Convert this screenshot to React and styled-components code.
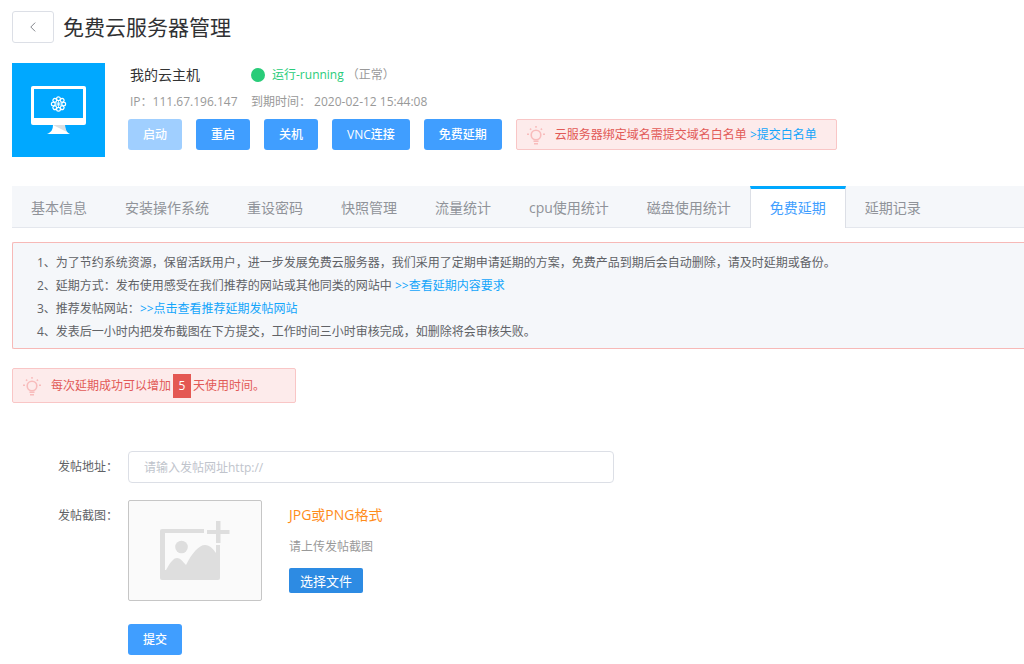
import React from "react";
import styled, { createGlobalStyle, css } from "styled-components";

const GlobalStyle = createGlobalStyle`
  *, *::before, *::after { box-sizing: border-box; }
  body {
    margin: 0;
    background: #fff;
    color: #606266;
    font: 12px/20px "Open Sans", "Noto Sans CJK SC", sans-serif;
  }
  button, input { font: inherit; }
  h1, h2, p, ol { margin: 0; padding: 0; font-weight: 400; }
  a { color: #12a5fb; text-decoration: none; }
`;

const Page = styled.main`
  padding: 11px 0 8px 12px;
`;

const TitleBar = styled.header`
  display: flex;
  align-items: center;
  gap: 9px;
  height: 32px;
`;

const BackButton = styled.button`
  display: flex;
  align-items: center;
  justify-content: center;
  width: 42px;
  height: 32px;
  padding: 0;
  border: 1px solid #dcdfe6;
  border-radius: 3px;
  background: #fff;
`;

const Title = styled.h1`
  color: #303133;
  font-size: 21px;
  line-height: 32px;
`;

const Server = styled.section`
  display: flex;
  gap: 23px;
  margin-top: 20px;
`;

const ServerTile = styled.div`
  flex: none;
  width: 93px;
  height: 94px;
  background: #00a8ff;
  svg { display: block; }
`;

const ServerInfo = styled.div`
  flex: 1;
`;

const Facts = styled.div`
  display: grid;
  grid-template-columns: 121px auto;
  grid-template-rows: 24px 30px;
  align-items: center;
  padding-left: 2px;
  color: #999;
`;

const ServerName = styled.h2`
  color: #333;
  font-size: 14px;
`;

const Status = styled.p`
  display: flex;
  align-items: center;
`;

const StatusDot = styled.i`
  width: 14px;
  height: 14px;
  margin-right: 7px;
  border-radius: 50%;
  background: #29cc79;
`;

const StatusText = styled.span`
  margin-right: 3px;
  color: #29cc79;
`;

const Actions = styled.div`
  display: flex;
  align-items: center;
  gap: 14px;
  margin-top: 2px;
`;

const Button = styled.button`
  height: 31px;
  padding: 0 15px;
  border: 0;
  border-radius: 3px;
  background: #409eff;
  color: #fff;
  font-weight: 500;
  white-space: nowrap;
  &:disabled { background: #a0cfff; }
`;

const Alert = styled.p`
  display: flex;
  align-items: center;
  gap: 9px;
  width: ${(p) => (p.$large ? "284px" : "321px")};
  height: ${(p) => (p.$large ? "35px" : "31px")};
  margin-top: ${(p) => (p.$large ? "19px" : "0")};
  padding: 0 9px;
  border: 1px solid #f9c6c6;
  border-radius: 2px;
  background: #fdebeb;
  color: #e25a57;
  white-space: nowrap;
`;

const Days = styled.strong`
  display: inline-block;
  width: 18px;
  margin: 0 2px;
  background: #e45853;
  color: #fff;
  font-weight: 400;
  line-height: 24px;
  text-align: center;
`;

const Tabs = styled.nav`
  display: flex;
  height: 42px;
  margin-top: 29px;
  border-bottom: 1px solid #e4e7ed;
  background: #f5f7fa;
`;

const Tab = styled.button`
  height: 42px;
  padding: 2px 19px 0;
  border: 0;
  background: none;
  color: #909399;
  font-size: 14px;
  white-space: nowrap;
  ${(p) => p.$active && css`
    padding: 0 19px 1px;
    border: 1px solid #dcdfe6;
    border-top: 3px solid #00a8ff;
    border-bottom: 0;
    background: #fff;
    color: #409eff;
  `}
`;

const Notice = styled.ol`
  margin-top: 14px;
  padding: 8px 24px 5px;
  border: 1px solid #f7b9b7;
  border-right: 0;
  border-radius: 2px 0 0 2px;
  background: #f5f7fa;
  list-style: none;
  line-height: 23px;
`;

const Form = styled.form`
  margin-top: 48px;
`;

const FormRow = styled.div`
  display: grid;
  grid-template-columns: 106px minmax(0, 486px);
  column-gap: 10px;
  margin-bottom: ${(p) => p.$gap};
`;

const Label = styled.label`
  line-height: 32px;
  text-align: right;
`;

const TextInput = styled.input`
  width: 100%;
  height: 32px;
  padding: 0 15px;
  border: 1px solid #dcdfe6;
  border-radius: 4px;
  background: #fff;
  color: #606266;
  outline: none;
  &::placeholder { color: #c0c4cc; opacity: 1; }
`;

const Upload = styled.div`
  display: flex;
  gap: 27px;
`;

const Preview = styled.div`
  width: 134px;
  height: 101px;
  border: 1px solid #c6c6c6;
  border-radius: 2px;
  background: #fafafa;
  svg { display: block; }
`;

const UploadSide = styled.div`
  display: flex;
  flex-direction: column;
  align-items: flex-start;
  padding-top: 5px;
`;

const Format = styled.p`
  color: #ff8c1a;
  font-size: 14px;
`;

const Hint = styled.p`
  margin: 12px 0 11px;
  color: #999;
`;

const FileButton = styled.button`
  width: 74px;
  height: 25px;
  padding: 0;
  border: 0;
  border-radius: 2px;
  background: #2d8be3;
  color: #fff;
  font-size: 13px;
`;

const Submit = styled(Button)`
  grid-column: 2;
  justify-self: start;
`;

function BulbIcon() {
  return (
    <svg width="20" height="20" viewBox="0 0 20 20" fill="none" stroke="#f8bcbc" strokeWidth="1.6" aria-hidden="true">
      <circle cx="10" cy="10" r="4.800" />
      <path d="M7.500 16.300h5M8 18.800h4M10 1v1.800M4 3.600l1.200 1.200M16 3.600l-1.200 1.200M1 9.300h2M17 9.300h2" />
    </svg>
  );
}

function MonitorIcon() {
  return (
    <svg width="93" height="94" viewBox="0 0 93 94" aria-hidden="true">
      <path d="M41 61h12c0 5 1 8 5 10H35c5-2 6-5 6-10z" fill="#fff" />
      <path d="M41 62h12c0 3 1 5 2 7z" fill="#d9dfe3" />
      <rect x="19" y="23" width="55" height="39" rx="2" fill="#fff" />
      <path d="M22 26h49v29H22z" fill="#00a8ff" />
      <g fill="none" stroke="#fff" strokeWidth="1.2">
        {[0, 45, 90, 135, 180, 225, 270, 315].map((angle) => (
          <circle key={angle} cx="46.500" cy="35.800" r="1.900" transform={`rotate(${angle} 46.5 41)`} />
        ))}
        <path d="M46.500 38v6M43.500 41h6M44.400 38.900l4.200 4.200M48.600 38.900l-4.200 4.200" strokeWidth=".8" />
      </g>
    </svg>
  );
}

function PictureIcon() {
  return (
    <svg width="132" height="99" viewBox="0 0 132 99" fill="#dedede" aria-hidden="true">
      <path d="M33 28h42v4H36v37l1 0c5-9 8-12 11-12 4 0 6 4 9 7 6-12 13-20 19-20 5 0 8 4 11 8v-8h4v33q0 2-2 2H33q-2 0-2-2V30q0-2 2-2z" />
      <circle cx="52.500" cy="46" r="6.300" />
      <path d="M87 20h4.500v9h9v4h-9v9h-4.500v-9h-9v-4h9z" />
    </svg>
  );
}

const tabs = ["基本信息", "安装操作系统", "重设密码", "快照管理", "流量统计", "cpu使用统计", "磁盘使用统计", "免费延期", "延期记录"];

export default function App() {
  return (
    <Page>
      <GlobalStyle />
      <TitleBar>
        <BackButton type="button" aria-label="返回">
          <svg width="6" height="10" viewBox="0 0 6 10" fill="none" stroke="#82858b" aria-hidden="true">
            <path d="M5.200 .6L.8 5l4.400 4.400" />
          </svg>
        </BackButton>
        <Title>免费云服务器管理</Title>
      </TitleBar>

      <Server>
        <ServerTile><MonitorIcon /></ServerTile>
        <ServerInfo>
          <Facts>
            <ServerName>我的云主机</ServerName>
            <Status>
              <StatusDot />
              <StatusText>运行-running</StatusText>
              <span>（正常）</span>
            </Status>
            <p>IP：111.67.196.147</p>
            <p>到期时间： 2020-02-12 15:44:08</p>
          </Facts>
          <Actions>
            <Button type="button" disabled>启动</Button>
            <Button type="button">重启</Button>
            <Button type="button">关机</Button>
            <Button type="button">VNC连接</Button>
            <Button type="button">免费延期</Button>
            <Alert>
              <BulbIcon />
              <span>云服务器绑定域名需提交域名白名单 <a href="#whitelist">&gt;提交白名单</a></span>
            </Alert>
          </Actions>
        </ServerInfo>
      </Server>

      <Tabs>
        {tabs.map((name) => (
          <Tab key={name} type="button" $active={name === "免费延期"}>{name}</Tab>
        ))}
      </Tabs>

      <Notice>
        <li>1、为了节约系统资源，保留活跃用户，进一步发展免费云服务器，我们采用了定期申请延期的方案，免费产品到期后会自动删除，请及时延期或备份。</li>
        <li>2、延期方式：发布使用感受在我们推荐的网站或其他同类的网站中 <a href="#rules">&gt;&gt;查看延期内容要求</a></li>
        <li>3、推荐发帖网站：<a href="#sites">&gt;&gt;点击查看推荐延期发帖网站</a></li>
        <li>4、发表后一小时内把发布截图在下方提交，工作时间三小时审核完成，如删除将会审核失败。</li>
      </Notice>

      <Alert $large>
        <BulbIcon />
        <span>每次延期成功可以增加<Days>5</Days>天使用时间。</span>
      </Alert>

      <Form onSubmit={(e) => e.preventDefault()}>
        <FormRow $gap="17px">
          <Label htmlFor="post-url">发帖地址：</Label>
          <TextInput id="post-url" type="text" placeholder="请输入发帖网址http://" />
        </FormRow>
        <FormRow $gap="23px">
          <Label htmlFor="post-shot">发帖截图：</Label>
          <Upload>
            <Preview><PictureIcon /></Preview>
            <UploadSide>
              <Format>JPG或PNG格式</Format>
              <Hint>请上传发帖截图</Hint>
              <FileButton id="post-shot" type="button">选择文件</FileButton>
            </UploadSide>
          </Upload>
        </FormRow>
        <FormRow $gap="0">
          <Submit type="submit">提交</Submit>
        </FormRow>
      </Form>
    </Page>
  );
}
